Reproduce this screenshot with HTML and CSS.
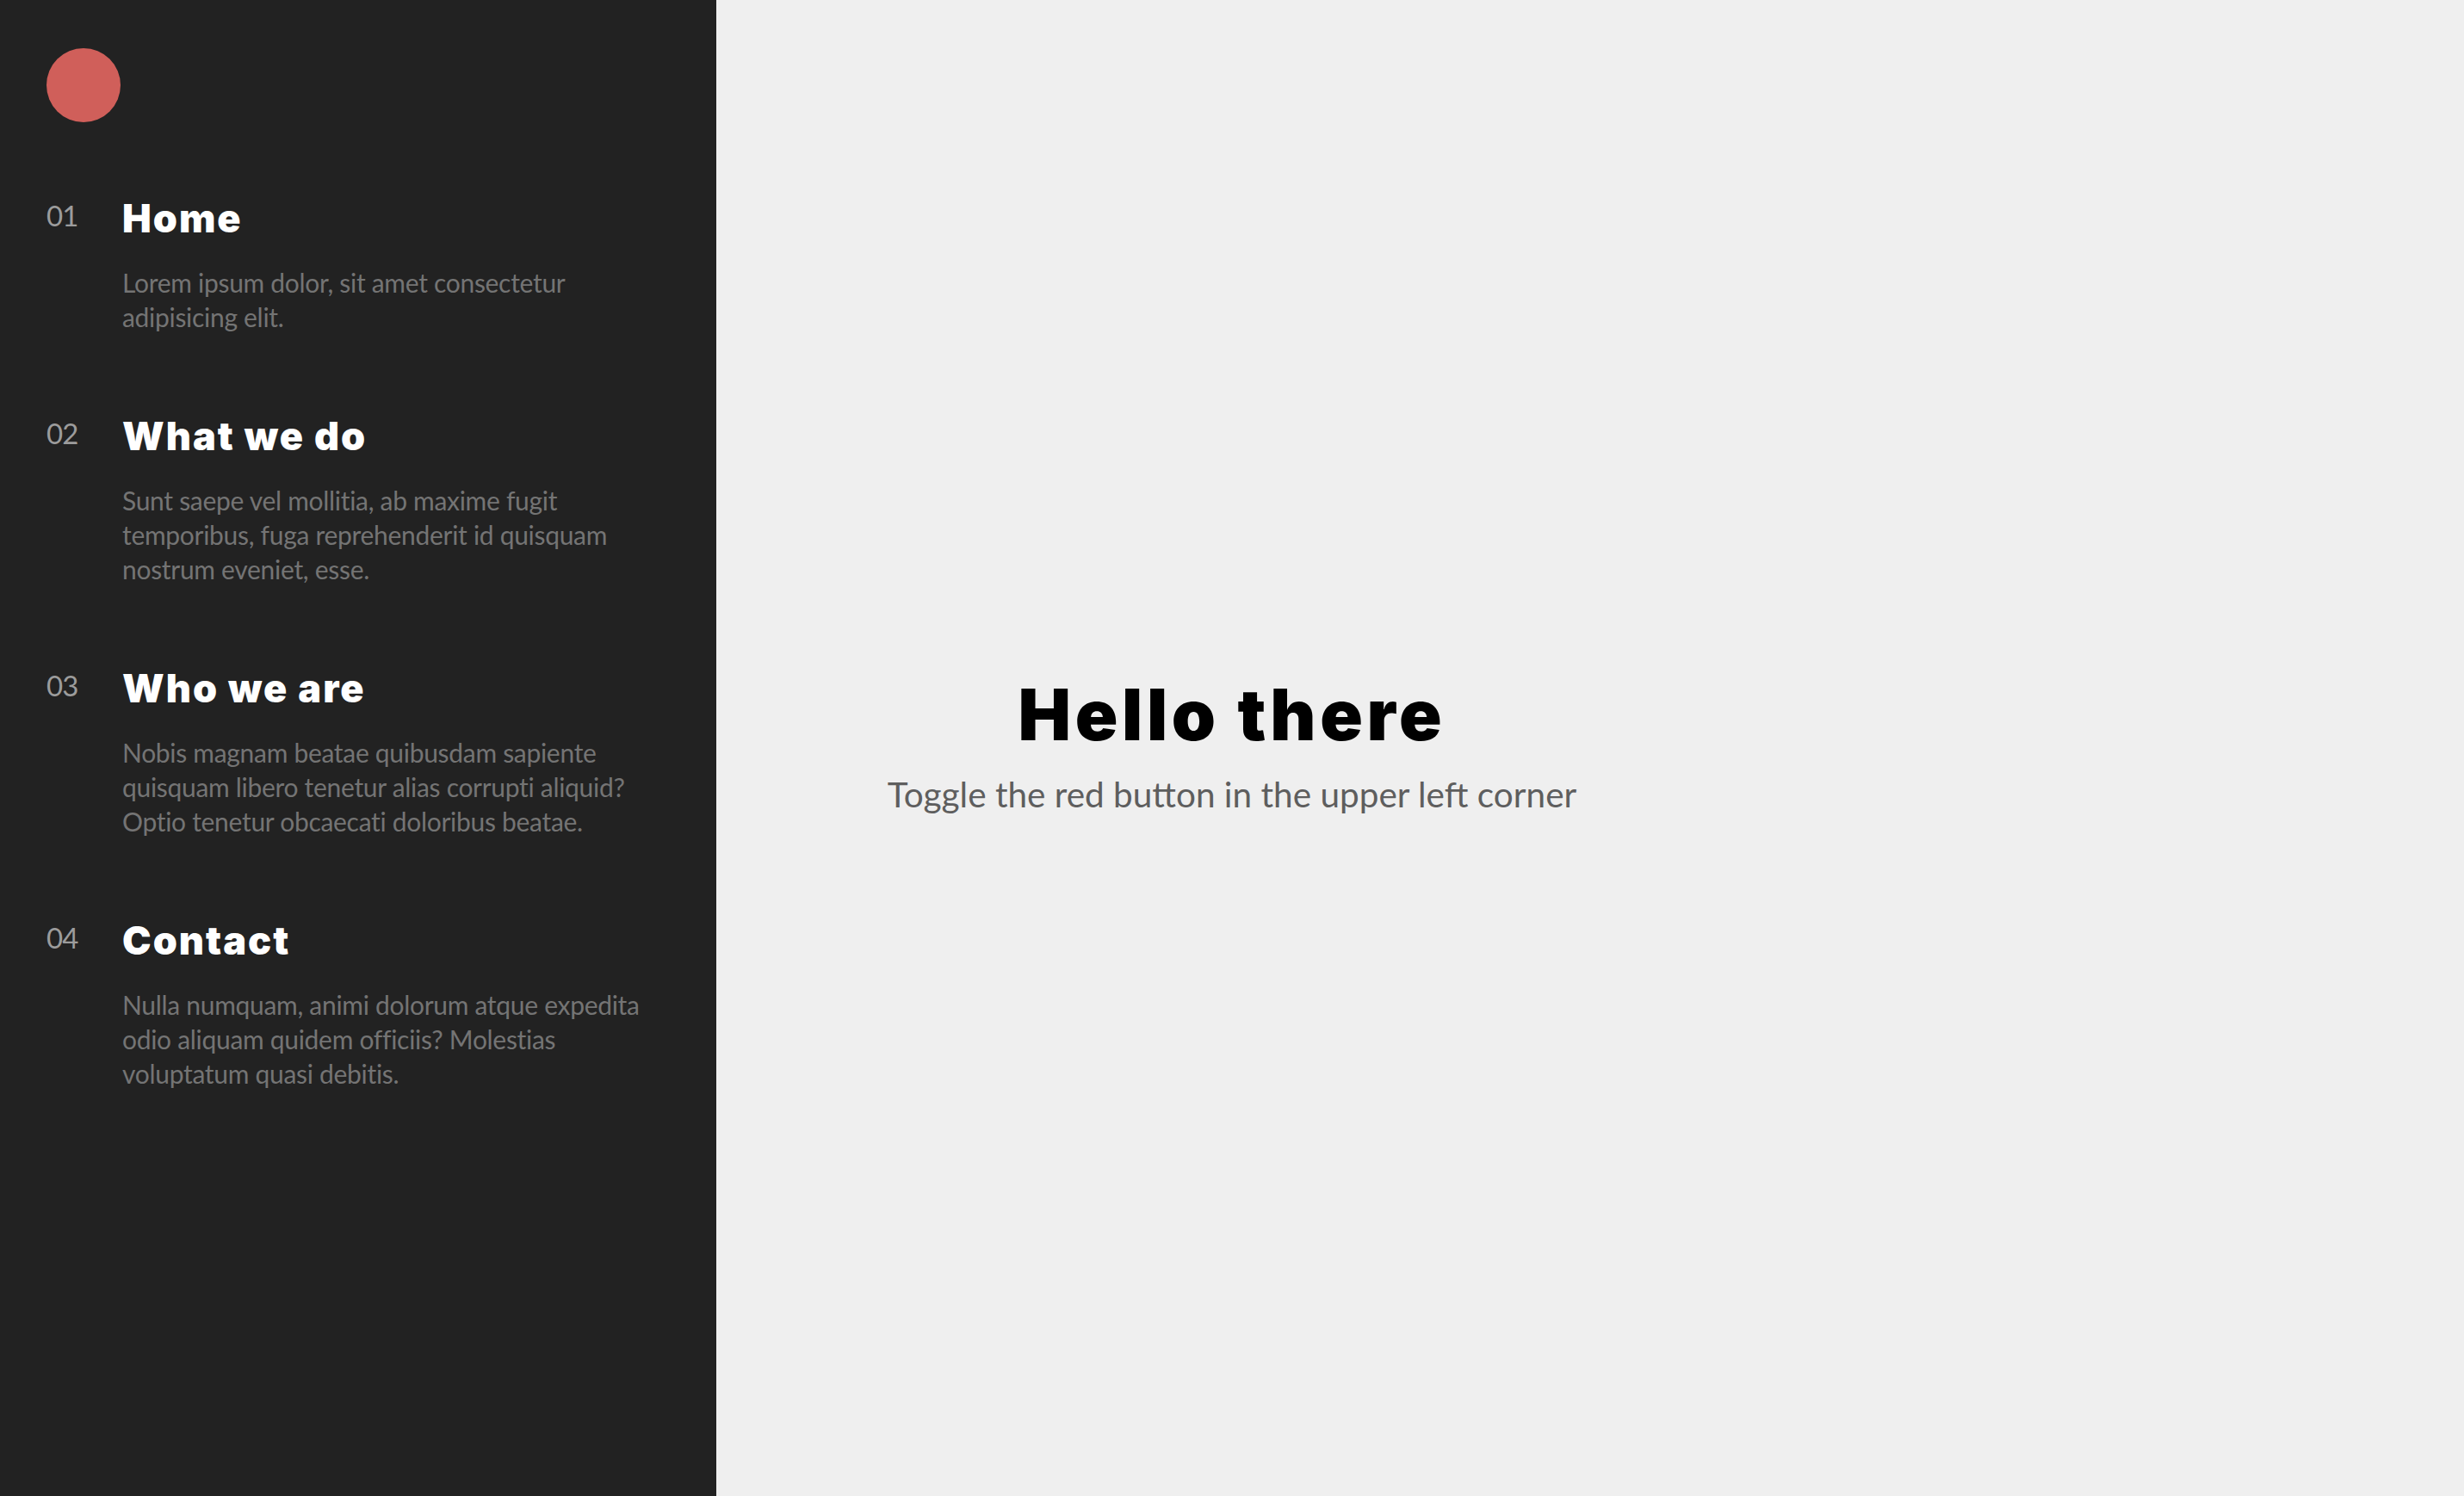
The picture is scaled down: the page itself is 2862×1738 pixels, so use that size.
FILE: index.html
```html
<!DOCTYPE html>
<html lang="en">
<head>
<meta charset="utf-8">
<title>Hello there</title>
<link rel="stylesheet" href="styles.css">
</head>
<body>
<aside class="drawer">
  <button class="toggle" aria-label="Toggle menu"></button>
  <nav class="menu">
    <div class="item">
      <span class="num">01</span>
      <div class="body">
        <h2 class="title">Home</h2>
        <p class="desc">Lorem ipsum dolor, sit amet consectetur adipisicing elit.</p>
      </div>
    </div>
    <div class="item">
      <span class="num">02</span>
      <div class="body">
        <h2 class="title">What we do</h2>
        <p class="desc">Sunt saepe vel mollitia, ab maxime fugit temporibus, fuga reprehenderit id quisquam nostrum eveniet, esse.</p>
      </div>
    </div>
    <div class="item">
      <span class="num">03</span>
      <div class="body">
        <h2 class="title">Who we are</h2>
        <p class="desc">Nobis magnam beatae quibusdam sapiente quisquam libero tenetur alias corrupti aliquid? Optio tenetur obcaecati doloribus beatae.</p>
      </div>
    </div>
    <div class="item">
      <span class="num">04</span>
      <div class="body">
        <h2 class="title">Contact</h2>
        <p class="desc">Nulla numquam, animi dolorum atque expedita odio aliquam quidem officiis? Molestias voluptatum quasi debitis.</p>
      </div>
    </div>
  </nav>
</aside>
<main class="main">
  <div class="hero">
    <h1 class="hero-title">Hello there</h1>
    <p class="hero-sub">Toggle the red button in the upper left corner</p>
  </div>
</main>
</body>
</html>
```

FILE: styles.css
```css
* { box-sizing: border-box; }
html, body { margin: 0; padding: 0; height: 100%; }
body {
  font-family: Lato, "Open Sans", "Liberation Sans", sans-serif;
  background: #efefef;
  overflow: hidden;
}
.drawer {
  position: fixed;
  top: 0;
  left: 0;
  bottom: 0;
  width: 832px;
  background: #222222;
  padding: 56px 54px 0 54px;
  z-index: 2;
}
.toggle {
  display: block;
  width: 86px;
  height: 86px;
  border: 0;
  padding: 0;
  border-radius: 50%;
  background: #d05f5a;
  cursor: pointer;
}
.menu {
  display: flex;
  flex-direction: column;
  gap: 95px;
  margin-top: 88px;
}
.item {
  display: flex;
  align-items: flex-start;
}
.num {
  width: 88px;
  flex: none;
  font-size: 33px;
  line-height: 40px;
  color: #9c9c9c;
  letter-spacing: -1px;
}
.body { flex: 1; }
.title {
  margin: 0;
  font-family: Inter, Roboto, "Open Sans", sans-serif;
  font-size: 45px;
  line-height: 48px;
  font-weight: 900;
  color: #ffffff;
  letter-spacing: 2px;
}
.desc {
  margin: 30px 0 0 0;
  max-width: 620px;
  font-size: 30px;
  line-height: 40px;
  color: #747474;
  letter-spacing: -0.3px;
}
.main {
  height: 100vh;
  display: flex;
  align-items: center;
  justify-content: center;
}
.hero {
  text-align: center;
  padding-bottom: 10px;
}
.hero-title {
  margin: 0;
  font-family: Inter, Roboto, "Open Sans", sans-serif;
  font-size: 82px;
  line-height: 100px;
  font-weight: 900;
  color: #000;
  letter-spacing: 4.6px;
}
.hero-sub {
  margin: 18px 0 0 0;
  font-size: 40.5px;
  line-height: 48px;
  color: #5e5e5e;
  letter-spacing: 0;
}
```
